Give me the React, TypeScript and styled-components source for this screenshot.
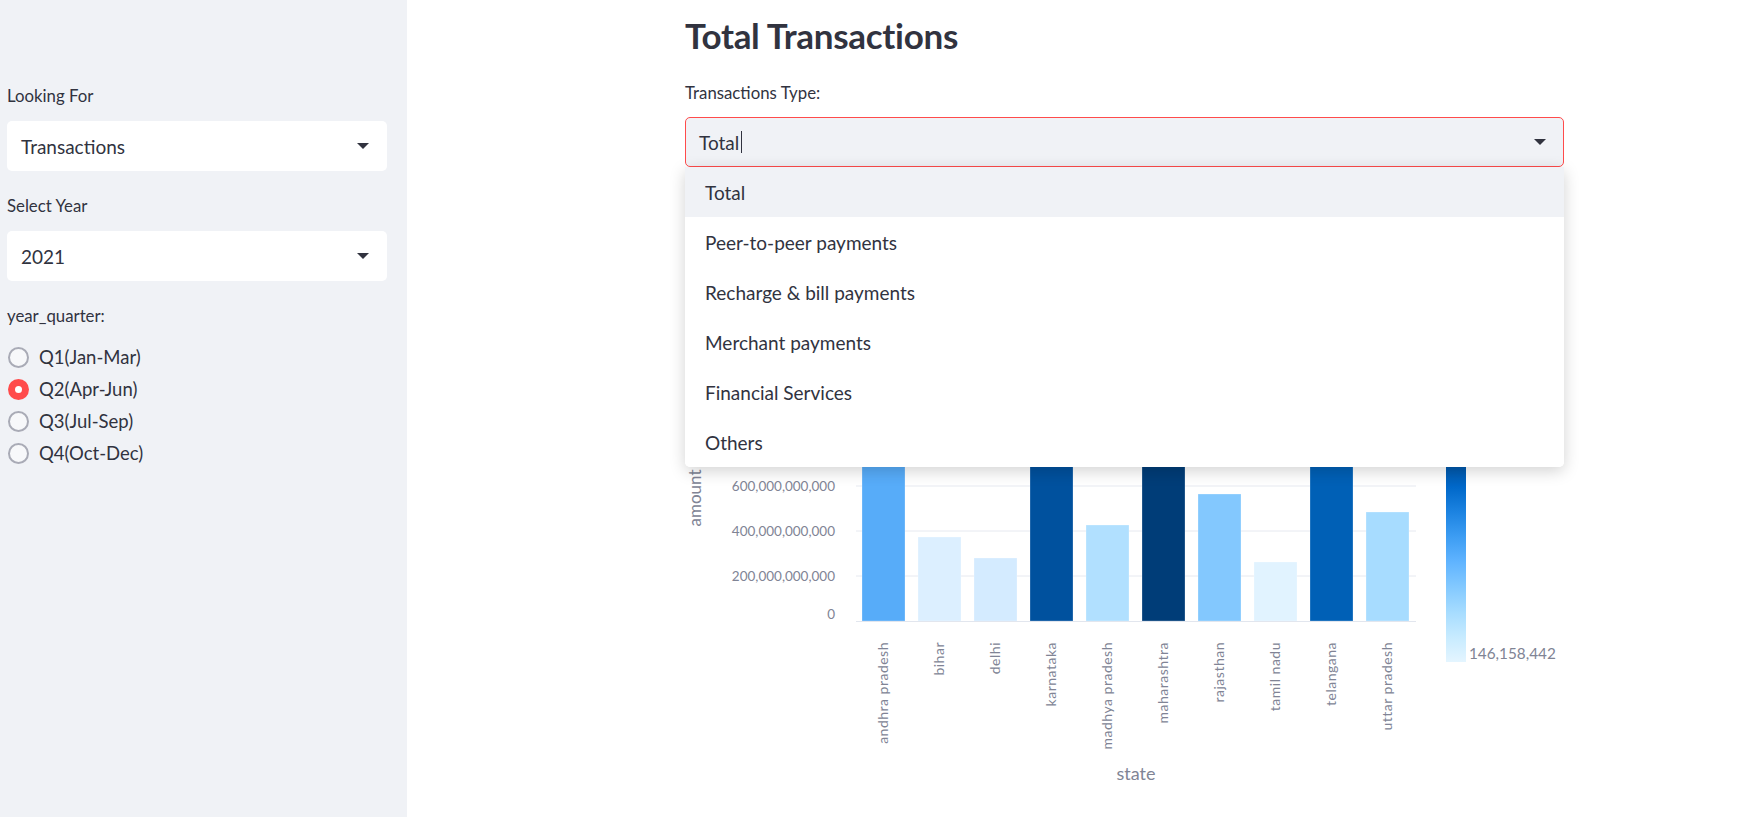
import React from "react";
import styled, { createGlobalStyle } from "styled-components";

const GlobalStyle = createGlobalStyle`
  html, body { margin: 0; padding: 0; background: #ffffff; }
  body { font-family: Lato, "Noto Sans", sans-serif; color: #31333f; }
  * { box-sizing: border-box; }
`;

const Shell = styled.div`
  display: flex;
  width: 100%;
  height: 817px;
  overflow: hidden;
`;

const Sidebar = styled.aside`
  width: 407px;
  flex: 0 0 407px;
  background: #f0f2f6;
  padding: 85px 20px 0 7px;
  display: flex;
  flex-direction: column;
`;

const FieldLabel = styled.div<{ $gap?: number }>`
  font-size: 16.8px;
  line-height: 22px;
  color: #31333f;
  margin-bottom: ${(p) => p.$gap ?? 14}px;
`;

const SideSelect = styled.div`
  height: 50px;
  background: #ffffff;
  border-radius: 5px;
  display: flex;
  align-items: center;
  justify-content: space-between;
  padding: 0 18px 0 14px;
  font-size: 19px;
  color: #31333f;
  margin-bottom: 24px;
`;

const Caret = styled.span`
  width: 0;
  height: 0;
  border-left: 6px solid transparent;
  border-right: 6px solid transparent;
  border-top: 6px solid #31333f;
`;

const RadioList = styled.div`
  display: flex;
  flex-direction: column;
`;

const RadioRow = styled.div`
  display: flex;
  align-items: center;
  height: 32px;
  gap: 10px;
  padding-left: 1px;
  font-size: 18.5px;
  color: #31333f;
`;

const RadioDot = styled.span<{ $on?: boolean }>`
  width: 21px;
  height: 21px;
  border-radius: 50%;
  flex: 0 0 21px;
  display: flex;
  align-items: center;
  justify-content: center;
  background: ${(p) => (p.$on ? "#ff4b4b" : "#f7f8fa")};
  border: ${(p) => (p.$on ? "none" : "2px solid #a9abb6")};
  &::after {
    content: "";
    display: ${(p) => (p.$on ? "block" : "none")};
    width: 7px;
    height: 7px;
    border-radius: 50%;
    background: #ffffff;
  }
`;

const Main = styled.main`
  flex: 1;
  padding: 14px 185px 0 278px;
  display: flex;
  flex-direction: column;
  min-width: 0;
`;

const Title = styled.h2`
  margin: 0;
  font-size: 35px;
  line-height: 42px;
  font-weight: 700;
  color: #31333f;
  letter-spacing: -0.3px;
`;

const MainLabel = styled(FieldLabel)`
  margin-top: 26px;
  margin-bottom: 13px;
`;

const SelectWrap = styled.div`
  position: relative;
  z-index: 5;
`;

const MainSelect = styled.div`
  height: 50px;
  background: #f0f2f6;
  border: 1px solid #ff4b4b;
  border-radius: 5px;
  display: flex;
  align-items: center;
  justify-content: space-between;
  padding: 0 17px 0 13px;
  font-size: 19px;
  color: #31333f;
`;

const InputText = styled.span`
  display: flex;
  align-items: center;
  &::after {
    content: "";
    width: 1px;
    height: 22px;
    margin-left: 2px;
    background: #31333f;
  }
`;

const Menu = styled.ul`
  position: absolute;
  top: 100%;
  left: 0;
  right: 0;
  margin: 0;
  padding: 0;
  list-style: none;
  background: #ffffff;
  border-radius: 0 0 5px 5px;
  box-shadow: 0 4px 16px rgba(0, 0, 0, 0.18);
  overflow: hidden;
`;

const MenuItem = styled.li<{ $active?: boolean }>`
  height: 50px;
  display: flex;
  align-items: center;
  padding-left: 20px;
  font-size: 19px;
  color: #31333f;
  background: ${(p) => (p.$active ? "#f0f2f6" : "#ffffff")};
`;

const ChartBox = styled.div`
  margin-top: 16px;
  position: relative;
  z-index: 1;
`;

const ChartSvg = styled.svg`
  display: block;
  font-family: Lato, "Noto Sans", sans-serif;
`;

const states = [
  { name: "andhra pradesh", top: 400, color: "#57acf9" },
  { name: "bihar", top: 536, color: "#dcefff" },
  { name: "delhi", top: 557, color: "#d4ebff" },
  { name: "karnataka", top: 330, color: "#00519e" },
  { name: "madhya pradesh", top: 524, color: "#b1e0ff" },
  { name: "maharashtra", top: 300, color: "#003d78" },
  { name: "rajasthan", top: 493, color: "#83c8fe" },
  { name: "tamil nadu", top: 561, color: "#e1f3ff" },
  { name: "telangana", top: 360, color: "#0060b6" },
  { name: "uttar pradesh", top: 511, color: "#a7dcff" },
];

const OY = 182; // page y of chart top
const ZERO = 620 - OY;
const tickColor = "#808495";

function Chart() {
  const hiddenGrid = [350 - OY, 395 - OY, 440 - OY];
  const grid = [
    { label: "600,000,000,000", y: 485 - OY },
    { label: "400,000,000,000", y: 530 - OY },
    { label: "200,000,000,000", y: 575 - OY },
  ];
  return (
    <ChartSvg width={879} height={635} viewBox="0 0 879 635">
      <defs>
        <linearGradient id="cbar" x1="0" y1="1" x2="0" y2="0">
          <stop offset="0" stopColor="#e4f5ff" />
          <stop offset="0.111" stopColor="#c7ebff" />
          <stop offset="0.222" stopColor="#a6dcff" />
          <stop offset="0.333" stopColor="#83c9ff" />
          <stop offset="0.444" stopColor="#60b4ff" />
          <stop offset="0.556" stopColor="#3d9df3" />
          <stop offset="0.667" stopColor="#1c83e1" />
          <stop offset="0.778" stopColor="#0068c9" />
          <stop offset="0.889" stopColor="#0054a3" />
          <stop offset="1" stopColor="#004280" />
        </linearGradient>
      </defs>
      {hiddenGrid.map((y) => (
        <line key={y} x1={171} x2={731} y1={y} y2={y} stroke="#e6e9f0" strokeWidth={1} />
      ))}
      {grid.map((g) => (
        <g key={g.label}>
          <line x1={171} x2={731} y1={g.y} y2={g.y} stroke="#e6e9f0" strokeWidth={1} />
          <text x={150} y={g.y + 5} textAnchor="end" fontSize={13.5} fill={tickColor}>
            {g.label}
          </text>
        </g>
      ))}
      <text x={150} y={613 - OY + 5} textAnchor="end" fontSize={13.5} fill={tickColor}>
        0
      </text>
      <text
        transform={`translate(16 ${497 - OY}) rotate(-90)`}
        textAnchor="middle"
        fontSize={17}
        fill={tickColor}
      >
        amount
      </text>
      {states.map((s, i) => {
        const x = 177 + i * 56;
        const top = s.top - OY;
        return (
          <g key={s.name}>
            <rect
              x={x}
              y={top}
              width={43}
              height={ZERO - top}
              fill={s.color}
              stroke="#ffffff"
              strokeOpacity={0.5}
              strokeWidth={0.5}
            />
            <text
              transform={`translate(${x + 26} ${641 - OY}) rotate(-90)`}
              textAnchor="end"
              fontSize={14}
              letterSpacing={0.5}
              fill={tickColor}
            >
              {s.name}
            </text>
          </g>
        );
      })}
      <line x1={171} x2={731} y1={ZERO + 0.5} y2={ZERO + 0.5} stroke="#e2e6ee" strokeWidth={1} />
      <text x={451} y={597} textAnchor="middle" fontSize={18} fill={tickColor}>
        state
      </text>
      <rect x={761} y={436 - OY} width={20} height={225} fill="url(#cbar)" />
      <text x={784} y={476} fontSize={15.3} fill={tickColor}>
        146,158,442
      </text>
    </ChartSvg>
  );
}

const options = [
  "Total",
  "Peer-to-peer payments",
  "Recharge & bill payments",
  "Merchant payments",
  "Financial Services",
  "Others",
];

const quarters = ["Q1(Jan-Mar)", "Q2(Apr-Jun)", "Q3(Jul-Sep)", "Q4(Oct-Dec)"];

export default function App() {
  return (
    <>
      <GlobalStyle />
      <Shell>
        <Sidebar>
          <FieldLabel>Looking For</FieldLabel>
          <SideSelect>
            <span>Transactions</span>
            <Caret />
          </SideSelect>
          <FieldLabel>Select Year</FieldLabel>
          <SideSelect>
            <span>2021</span>
            <Caret />
          </SideSelect>
          <FieldLabel>year_quarter:</FieldLabel>
          <RadioList>
            {quarters.map((q, i) => (
              <RadioRow key={q}>
                <RadioDot $on={i === 1} />
                <span>{q}</span>
              </RadioRow>
            ))}
          </RadioList>
        </Sidebar>
        <Main>
          <Title>Total Transactions</Title>
          <MainLabel>Transactions Type:</MainLabel>
          <SelectWrap>
            <MainSelect>
              <InputText>Total</InputText>
              <Caret />
            </MainSelect>
            <Menu>
              {options.map((o, i) => (
                <MenuItem key={o} $active={i === 0}>
                  {o}
                </MenuItem>
              ))}
            </Menu>
          </SelectWrap>
          <ChartBox>
            <Chart />
          </ChartBox>
        </Main>
      </Shell>
    </>
  );
}
